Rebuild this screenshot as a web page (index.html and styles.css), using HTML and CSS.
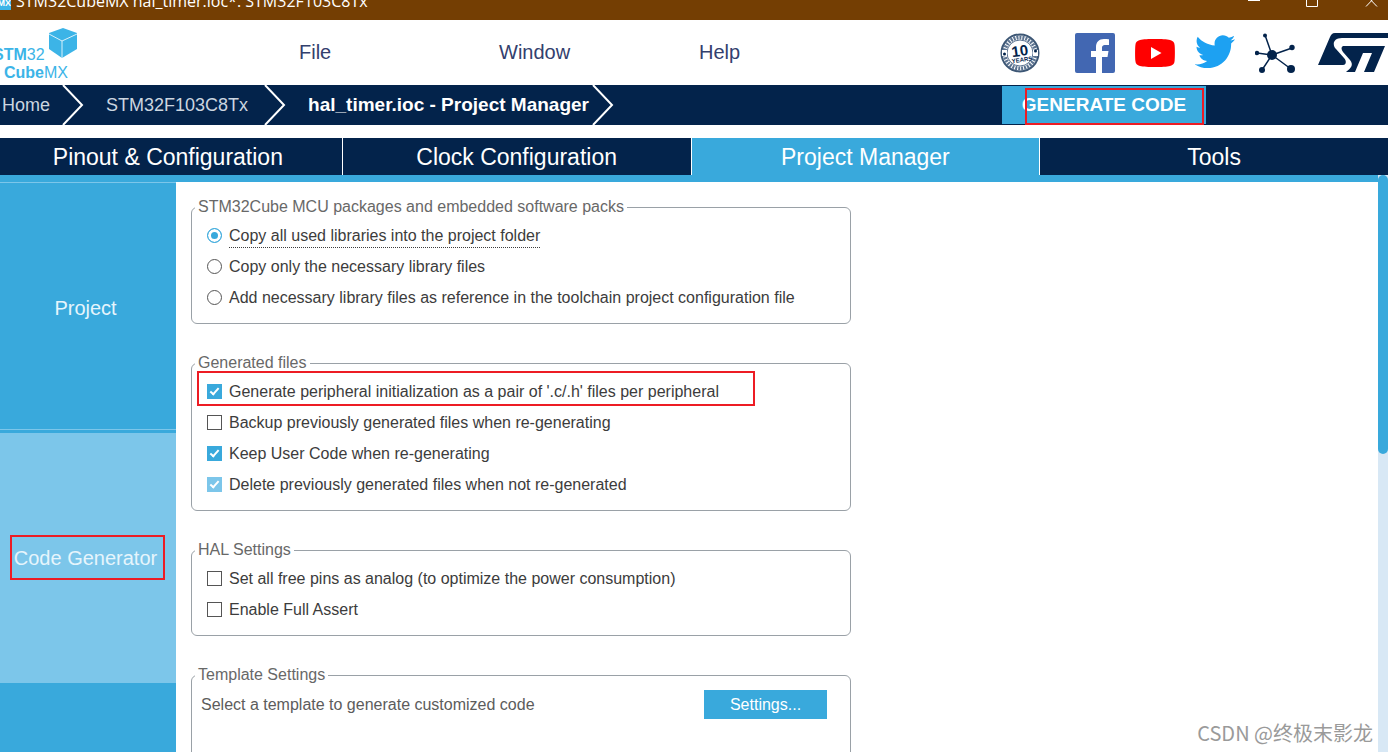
FILE: index.html
```html
<!DOCTYPE html>
<html lang="en">
<head>
  <meta charset="UTF-8">
  <title>STM32CubeMX</title>
  <link rel="stylesheet" href="styles.css">
</head>
<body>
  <div class="titlebar">
    <span class="app-icon">MX</span>
    <span class="app-title">STM32CubeMX hal_timer.ioc*: STM32F103C8Tx</span>
    <svg class="window-buttons" width="136" height="20" viewBox="0 0 136 20" fill="none" stroke="#fff">
      <path d="M0 .5h12M58.500 -4v10.500h11v-10.500M118 -5l11 11.500M129 -5l-11 11.500"/>
    </svg>
  </div>

  <header class="header">
    <div class="logo">
      <svg width="80" height="60" viewBox="0 0 80 60">
        <path fill="#3cb4e7" d="M63 5l14 5v16l-15 9-13-9V10z"/>
        <path fill="none" stroke="#d9f1fb" d="M49 11l13 7 15-7M62 18v17"/>
        <text x="-7" y="37"><tspan class="strong">STM</tspan>32</text>
        <text x="4" y="55"><tspan class="strong">Cube</tspan>MX</text>
      </svg>
    </div>
    <nav class="menu">
      <a href="#">File</a>
      <a href="#">Window</a>
      <a href="#">Help</a>
    </nav>
    <div class="social">
      <a class="badge" href="#" aria-label="10 years">
        <svg width="40" height="40" viewBox="0 0 40 40">
          <circle cx="20" cy="20" r="18.500" fill="#fff" stroke="#3d5775" stroke-width="2"/>
          <circle cx="20" cy="20" r="15.500" fill="none" stroke="#5c7390" stroke-width="4" stroke-dasharray="2 1"/>
          <circle cx="20" cy="20" r="13" fill="#fff" stroke="#5c7390"/>
          <path fill="#fff" d="M2 17h5v6H2zM33 17h5v6h-5z"/>
          <circle cx="4.500" cy="21" r="1.500" fill="#03234b"/>
          <circle cx="35.500" cy="18" r="1.500" fill="#03234b"/>
          <g transform="rotate(-8 20 20)" fill="#03234b">
            <text class="badge-number" x="20" y="23">10</text>
            <text class="badge-years" x="21" y="29">YEARS</text>
          </g>
        </svg>
      </a>
      <a href="#" aria-label="Facebook">
        <svg width="40" height="40" viewBox="0 0 40 40">
          <rect width="40" height="40" rx="2" fill="#4267b2"/>
          <path fill="#fff" d="M21 40V24h-5v-6h5v-4c0-5 3-8 8-8 2 0 4 0 5 .3v5.700h-3.500c-3 0-3.500 1.300-3.500 3.300V18h6.500l-1 6H27v16z"/>
        </svg>
      </a>
      <a href="#" aria-label="YouTube">
        <svg width="40" height="40" viewBox="0 0 40 40">
          <path fill="#f00" d="M20 6c-6 0-12 .2-15 1C2 8 .7 9 .4 12 0 15 0 25 .4 28c.3 3 1.600 4 4.600 5 3 .8 9 1 15 1s12-.2 15-1c3-1 4.300-2 4.600-5 .4-3 .4-13 0-16-.3-3-1.600-4-4.600-5-3-.8-9-1-15-1z"/>
          <path fill="#fff" d="M16 14v12l10.500-6z"/>
        </svg>
      </a>
      <a href="#" aria-label="Twitter">
        <svg width="40" height="40" viewBox="1 1.5 22.5 22.5">
          <path fill="#1da1f2" d="M23.640 4.937c-.835.370-1.732.620-2.675.733.962-.576 1.700-1.490 2.048-2.578-.900.534-1.897.922-2.958 1.130-.850-.904-2.060-1.470-3.400-1.470-2.572 0-4.658 2.086-4.658 4.660 0 .364.042.718.120 1.060-3.873-.195-7.304-2.050-9.602-4.868-.400.690-.630 1.490-.630 2.342 0 1.616.823 3.043 2.072 3.878-.764-.025-1.482-.234-2.110-.583v.060c0 2.257 1.605 4.140 3.737 4.568-.392.106-.803.162-1.227.162-.300 0-.593-.028-.877-.082.593 1.850 2.313 3.198 4.352 3.234-1.595 1.250-3.604 1.995-5.786 1.995-.376 0-.747-.022-1.112-.065 2.062 1.323 4.510 2.093 7.140 2.093 8.570 0 13.255-7.098 13.255-13.254 0-.200-.005-.402-.014-.602.910-.658 1.700-1.477 2.323-2.410z"/>
        </svg>
      </a>
      <a href="#" aria-label="Community">
        <svg width="40" height="40" viewBox="0 0 40 40">
          <path stroke="#03234b" stroke-width="1.500" d="M17 22L10 2M17 22L37 15M17 22L2 20M17 22L7 37M17 22L36 36"/>
          <g fill="#03234b">
            <circle cx="17" cy="22" r="5"/><circle cx="10" cy="2.500" r="2"/><circle cx="37" cy="14.500" r="2.700"/>
            <circle cx="2" cy="20" r="2.200"/><circle cx="7" cy="37" r="3"/><circle cx="36" cy="36" r="4"/>
          </g>
        </svg>
      </a>
      <a class="st" href="#" aria-label="ST">
        <svg width="70" height="40" viewBox="0 0 70 40">
          <path fill="#03234b" d="M17 0h60v5H24c-9 0-10 7-6 11l8 9c3 3 2 7-1 7H0L12 4c1-2 2-4 5-4z"/>
          <path fill="#03234b" d="M25 13h42L56 39H46l8-19h-9l-8 19h-9c5-4 8-7 4-12l-7-8c-2-3-2-5 0-6z"/>
        </svg>
      </a>
    </div>
  </header>

  <div class="breadcrumb">
    <a href="#">Home</a>
    <svg class="chevron first" width="22" height="40" viewBox="0 0 22 40"><path d="M1 0l19 20L1 40"/></svg>
    <a href="#">STM32F103C8Tx</a>
    <svg class="chevron" width="22" height="40" viewBox="0 0 22 40"><path d="M1 0l19 20L1 40"/></svg>
    <a class="current" href="#">hal_timer.ioc - Project Manager</a>
    <svg class="chevron last" width="22" height="40" viewBox="0 0 22 40"><path d="M1 0l19 20L1 40"/></svg>
    <div class="generate">
      <button type="button">GENERATE CODE</button>
      <div class="mark"></div>
    </div>
  </div>

  <nav class="tabs">
    <button type="button">Pinout &amp; Configuration</button>
    <button type="button">Clock Configuration</button>
    <button type="button" class="active">Project Manager</button>
    <button type="button">Tools</button>
  </nav>

  <div class="workspace">
    <div class="page">
      <aside class="sidebar">
        <button type="button" class="first">Project</button>
        <button type="button" class="active">Code Generator<span class="mark"></span></button>
        <button type="button" aria-label="Advanced Settings"></button>
      </aside>

      <main class="settings">
        <fieldset>
          <legend>STM32Cube MCU packages and embedded software packs</legend>
          <label class="option"><input type="radio" name="libs" checked><span class="focused">Copy all used libraries into the project folder</span></label>
          <label class="option"><input type="radio" name="libs"><span>Copy only the necessary library files</span></label>
          <label class="option"><input type="radio" name="libs"><span>Add necessary library files as reference in the toolchain project configuration file</span></label>
        </fieldset>

        <fieldset>
          <legend>Generated files</legend>
          <label class="option marked"><input type="checkbox" checked><span>Generate peripheral initialization as a pair of '.c/.h' files per peripheral</span><i class="mark"></i></label>
          <label class="option"><input type="checkbox"><span>Backup previously generated files when re-generating</span></label>
          <label class="option"><input type="checkbox" checked><span>Keep User Code when re-generating</span></label>
          <label class="option"><input type="checkbox" checked disabled><span>Delete previously generated files when not re-generated</span></label>
        </fieldset>

        <fieldset>
          <legend>HAL Settings</legend>
          <label class="option"><input type="checkbox"><span>Set all free pins as analog (to optimize the power consumption)</span></label>
          <label class="option"><input type="checkbox"><span>Enable Full Assert</span></label>
        </fieldset>

        <fieldset class="template">
          <legend>Template Settings</legend>
          <div class="template-row">
            <span>Select a template to generate customized code</span>
            <button type="button">Settings...</button>
          </div>
        </fieldset>
      </main>
    </div>
    <div class="scrollbar"><div class="thumb"></div></div>
  </div>

  <div class="watermark">CSDN @终极末影龙</div>
</body>
</html>
```
FILE: styles.css
```css
* {
  box-sizing: border-box;
}

body {
  margin: 0;
  height: 100vh;
  display: flex;
  flex-direction: column;
  overflow: hidden;
  position: relative;
  background-color: #fff;
  font-family: "Liberation Sans", Arial, sans-serif;
  font-size: 16px;
  color: #3c3c3c;
}

a {
  color: inherit;
  text-decoration: none;
}

button {
  border: none;
  padding: 0;
  font-family: inherit;
  color: #fff;
  cursor: pointer;
}

.mark {
  position: absolute;
  border: 2px solid #ed1c24;
  pointer-events: none;
}

/* title bar */
.titlebar {
  flex: none;
  display: flex;
  align-items: flex-start;
  height: 20px;
  overflow: hidden;
  background-color: #743e03;
  color: #fff;
}

.app-icon {
  width: 11px;
  height: 10px;
  margin-right: 5px;
  background-color: #3cb4e7;
  font-size: 9px;
  font-weight: bold;
  line-height: 6px;
  direction: rtl;
  overflow: hidden;
}

.app-title {
  flex: 1;
  font-family: "Open Sans", "Noto Sans", sans-serif;
  font-size: 16px;
  line-height: 20px;
  margin-top: -9px;
}

.window-buttons {
  margin-right: 4px;
}

/* menu */
.header {
  flex: none;
  display: flex;
  align-items: center;
  height: 65px;
}

.logo {
  width: 299px;
  height: 60px;
}

.logo text {
  font-size: 16px;
  fill: #3cb4e7;
}

.logo .strong {
  font-weight: bold;
}

.menu {
  flex: 1;
  display: flex;
  font-size: 20px;
  color: #33406e;
}

.menu a {
  width: 200px;
}

.social {
  display: flex;
  gap: 20px;
}

.social a,
.social svg {
  display: block;
}

.badge {
  margin-right: 15px;
}

.badge text {
  text-anchor: middle;
  font-weight: bold;
}

.badge-number {
  font-size: 15px;
}

.badge-years {
  font-size: 6px;
}

.st {
  margin-left: 3px;
}

/* breadcrumb */
.breadcrumb {
  flex: none;
  display: flex;
  align-items: center;
  height: 40px;
  padding-left: 2px;
  background-color: #03234b;
  color: #ccd6e0;
  font-size: 18px;
}

.breadcrumb .current {
  color: #fff;
  font-size: 19px;
  font-weight: bold;
}

.chevron {
  margin: 0 22px 0 16px;
  fill: none;
  stroke: #fff;
  stroke-width: 2;
}

.chevron.first {
  margin-left: 12px;
}

.chevron.last {
  margin-left: 3px;
}

.generate {
  position: relative;
  margin: 0 182px 0 auto;
}

.generate button {
  width: 204px;
  height: 38px;
  background-color: #39a9dc;
  font-size: 19px;
  font-weight: bold;
}

.generate .mark {
  inset: 2px 2px -1px 23px;
}

/* tabs */
.tabs {
  flex: none;
  display: flex;
  margin: 13px 0 0 -6px;
}

.tabs button {
  flex: 1;
  height: 37px;
  padding-top: 2px;
  background-color: #03234b;
  border-right: 1px solid #fff;
  font-size: 23px;
}

.tabs button:last-child {
  border-right: none;
}

.tabs .active {
  background-color: #39a9dc;
}

/* workspace */
.workspace {
  flex: 1;
  display: flex;
  min-height: 0;
}

.page {
  flex: 1;
  display: flex;
  border-top: 7px solid #39a9dc;
  overflow: hidden;
}

.sidebar {
  flex: none;
  display: flex;
  flex-direction: column;
  width: 176px;
  background-color: #39a9dc;
}

.sidebar button {
  flex: none;
  position: relative;
  height: 250px;
  padding-right: 5px;
  background-color: #39a9dc;
  color: #e6f5fc;
  font-size: 20px;
}

.sidebar .first {
  height: 251px;
  border-top: 1px solid #7cc6ea;
  box-shadow: inset 0 -3px #39a9dc, inset 0 -4px #7cc6ea;
}

.sidebar .active {
  background-color: #7cc6ea;
}

.sidebar .mark {
  inset: 102px 11px 103px 10px;
}

.settings {
  width: 660px;
  margin: 15px 0 0 15px;
}

fieldset {
  margin: 0 0 29px;
  padding: 3px 15px 10px;
  border: 1px solid #9aa1a7;
  border-radius: 6px;
}

legend {
  margin-left: -12px;
  padding: 0 3px;
  line-height: 20px;
  color: #686868;
}

.option {
  display: flex;
  align-items: center;
  height: 31px;
}

.option span {
  padding-top: 1px;
}

.option.marked {
  position: relative;
}

.option .mark {
  inset: -5px 80px 1px -10px;
}

.option input {
  appearance: none;
  flex: none;
  width: 15px;
  height: 15px;
  margin: 0 7px 0 0;
  border: 1px solid #555;
  background-color: #fff;
}

.option input[type="radio"] {
  border-radius: 50%;
}

.option input[type="radio"]:checked {
  border-color: #39a9dc;
  background-color: #39a9dc;
  box-shadow: inset 0 0 0 3px #fff;
}

.option input[type="checkbox"]:checked {
  border-color: #39a9dc;
  background-color: #39a9dc;
}

.option input[type="checkbox"]:checked::after {
  content: "";
  display: block;
  width: 3px;
  height: 7px;
  margin: 1px 0 0 4px;
  border: solid #fff;
  border-width: 0 2px 2px 0;
  transform: rotate(42deg);
}

.option input[type="checkbox"]:disabled {
  border-color: #7cc6ea;
  background-color: #7cc6ea;
}

.focused {
  line-height: 23px;
  border-bottom: 1px dotted #3c3c3c;
}

.template {
  height: 160px;
}

.template-row {
  display: flex;
  justify-content: space-between;
  align-items: center;
  margin: 2px 8px 0 -6px;
  color: #5c5c5c;
}

.template-row button {
  width: 123px;
  height: 29px;
  background-color: #39a9dc;
  font-size: 16px;
}

.scrollbar {
  flex: none;
  width: 10px;
  background-color: #d8e8f5;
}

.thumb {
  height: 279px;
  border-radius: 5px;
  background-color: #39a9dc;
}

.watermark {
  position: absolute;
  right: 15px;
  bottom: 5px;
  font-family: "Noto Sans CJK SC", sans-serif;
  font-size: 20px;
  line-height: 28px;
  color: #9a9a9a;
}
```
